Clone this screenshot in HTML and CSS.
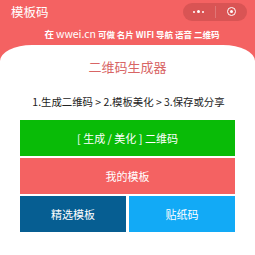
FILE: index.html
```html
<!DOCTYPE html>
<html>
<head>
<meta charset="utf-8">
<link rel="stylesheet" href="styles.css">
</head>
<body>
<div class="page">
  <div class="nav">
    <div class="nav-title">模板码</div>
    <div class="capsule">
      <div class="cap-dots"><span class="d"></span><span class="d big"></span><span class="d"></span></div>
      <div class="cap-sep"></div>
      <div class="cap-close"><span class="ring"><span class="dot"></span></span></div>
    </div>
  </div>
  <div class="sub"><span class="first">在</span> <span class="site">wwei.cn</span> 可做 名片 WIFI 导航 语音 二维码</div>
  <div class="card">
    <div class="card-title">二维码生成器</div>
    <div class="steps">1.生成二维码 &gt; 2.模板美化 &gt; 3.保存或分享</div>
    <div class="btns">
      <div class="btn green">[ 生成 / 美化 ] 二维码</div>
      <div class="btn red">我的模板</div>
      <div class="row">
        <div class="btn navy">精选模板</div>
        <div class="btn sky">贴纸码</div>
      </div>
    </div>
  </div>
</div>
</body>
</html>
```
FILE: styles.css
```css
html, body {
  margin: 0;
  padding: 0;
  background: #fff;
}
body {
  font-family: "Noto Sans CJK SC", "Noto Sans", sans-serif;
  width: 255px;
  height: 255px;
  overflow: hidden;
}
.page {
  background: linear-gradient(#f46262 0, #f46262 61px, #fff 61px);
  height: 255px;
}
.nav {
  height: 23px;
  display: flex;
  align-items: center;
  justify-content: space-between;
  padding: 0 8px 0 11px;
}
.nav-title {
  color: #fff;
  font-size: 12.5px;
  line-height: 16px;
  margin-top: 1px;
}
.capsule {
  width: 64px;
  height: 18px;
  border-radius: 9px;
  background: #d95454;
  display: flex;
  align-items: center;
}
.cap-dots {
  flex: 1;
  display: flex;
  align-items: center;
  justify-content: center;
  gap: 2px;
}
.d {
  width: 2px;
  height: 2px;
  border-radius: 50%;
  background: #fff;
}
.d.big {
  width: 3px;
  height: 3px;
}
.cap-sep {
  width: 1px;
  height: 12px;
  background: rgba(255,255,255,0.2);
}
.cap-close {
  flex: 1;
  display: flex;
  align-items: center;
  justify-content: center;
}
.ring {
  width: 7px;
  height: 7px;
  border: 1.5px solid #fff;
  border-radius: 50%;
  display: flex;
  align-items: center;
  justify-content: center;
}
.ring .dot {
  width: 3px;
  height: 3px;
  border-radius: 50%;
  background: #fff;
}
.sub {
  color: #fff;
  font-size: 8.5px;
  font-weight: bold;
  text-align: center;
  line-height: 22px;
  height: 22px;
  white-space: nowrap;
  padding-left: 9px;
}
.sub .first {
  font-size: 9.5px;
}
.sub .site {
  font-size: 10.5px;
  font-weight: normal;
}
.card {
  background: #fff;
  border-radius: 32px 32px 0 0 / 16px 16px 0 0;
  height: 210px;
}
.card-title {
  color: #d86565;
  font-size: 13px;
  text-align: center;
  padding-top: 13px;
  line-height: 18px;
}
.steps {
  color: #222;
  font-size: 10.4px;
  text-align: center;
  line-height: 16px;
  margin-top: 18px;
  padding-left: 2px;
}
.btns {
  margin: 10px 20px 0 20px;
  display: flex;
  flex-direction: column;
  gap: 2px;
}
.btn {
  height: 36px;
  color: #fff;
  font-size: 11px;
  display: flex;
  align-items: center;
  justify-content: center;
}
.green { background: #09bb07; }
.red { background: #f46262; }
.row {
  display: flex;
  gap: 3px;
}
.row .btn { flex: 1; }
.navy { background: #065e92; }
.sky { background: #12aaf6; }
```
